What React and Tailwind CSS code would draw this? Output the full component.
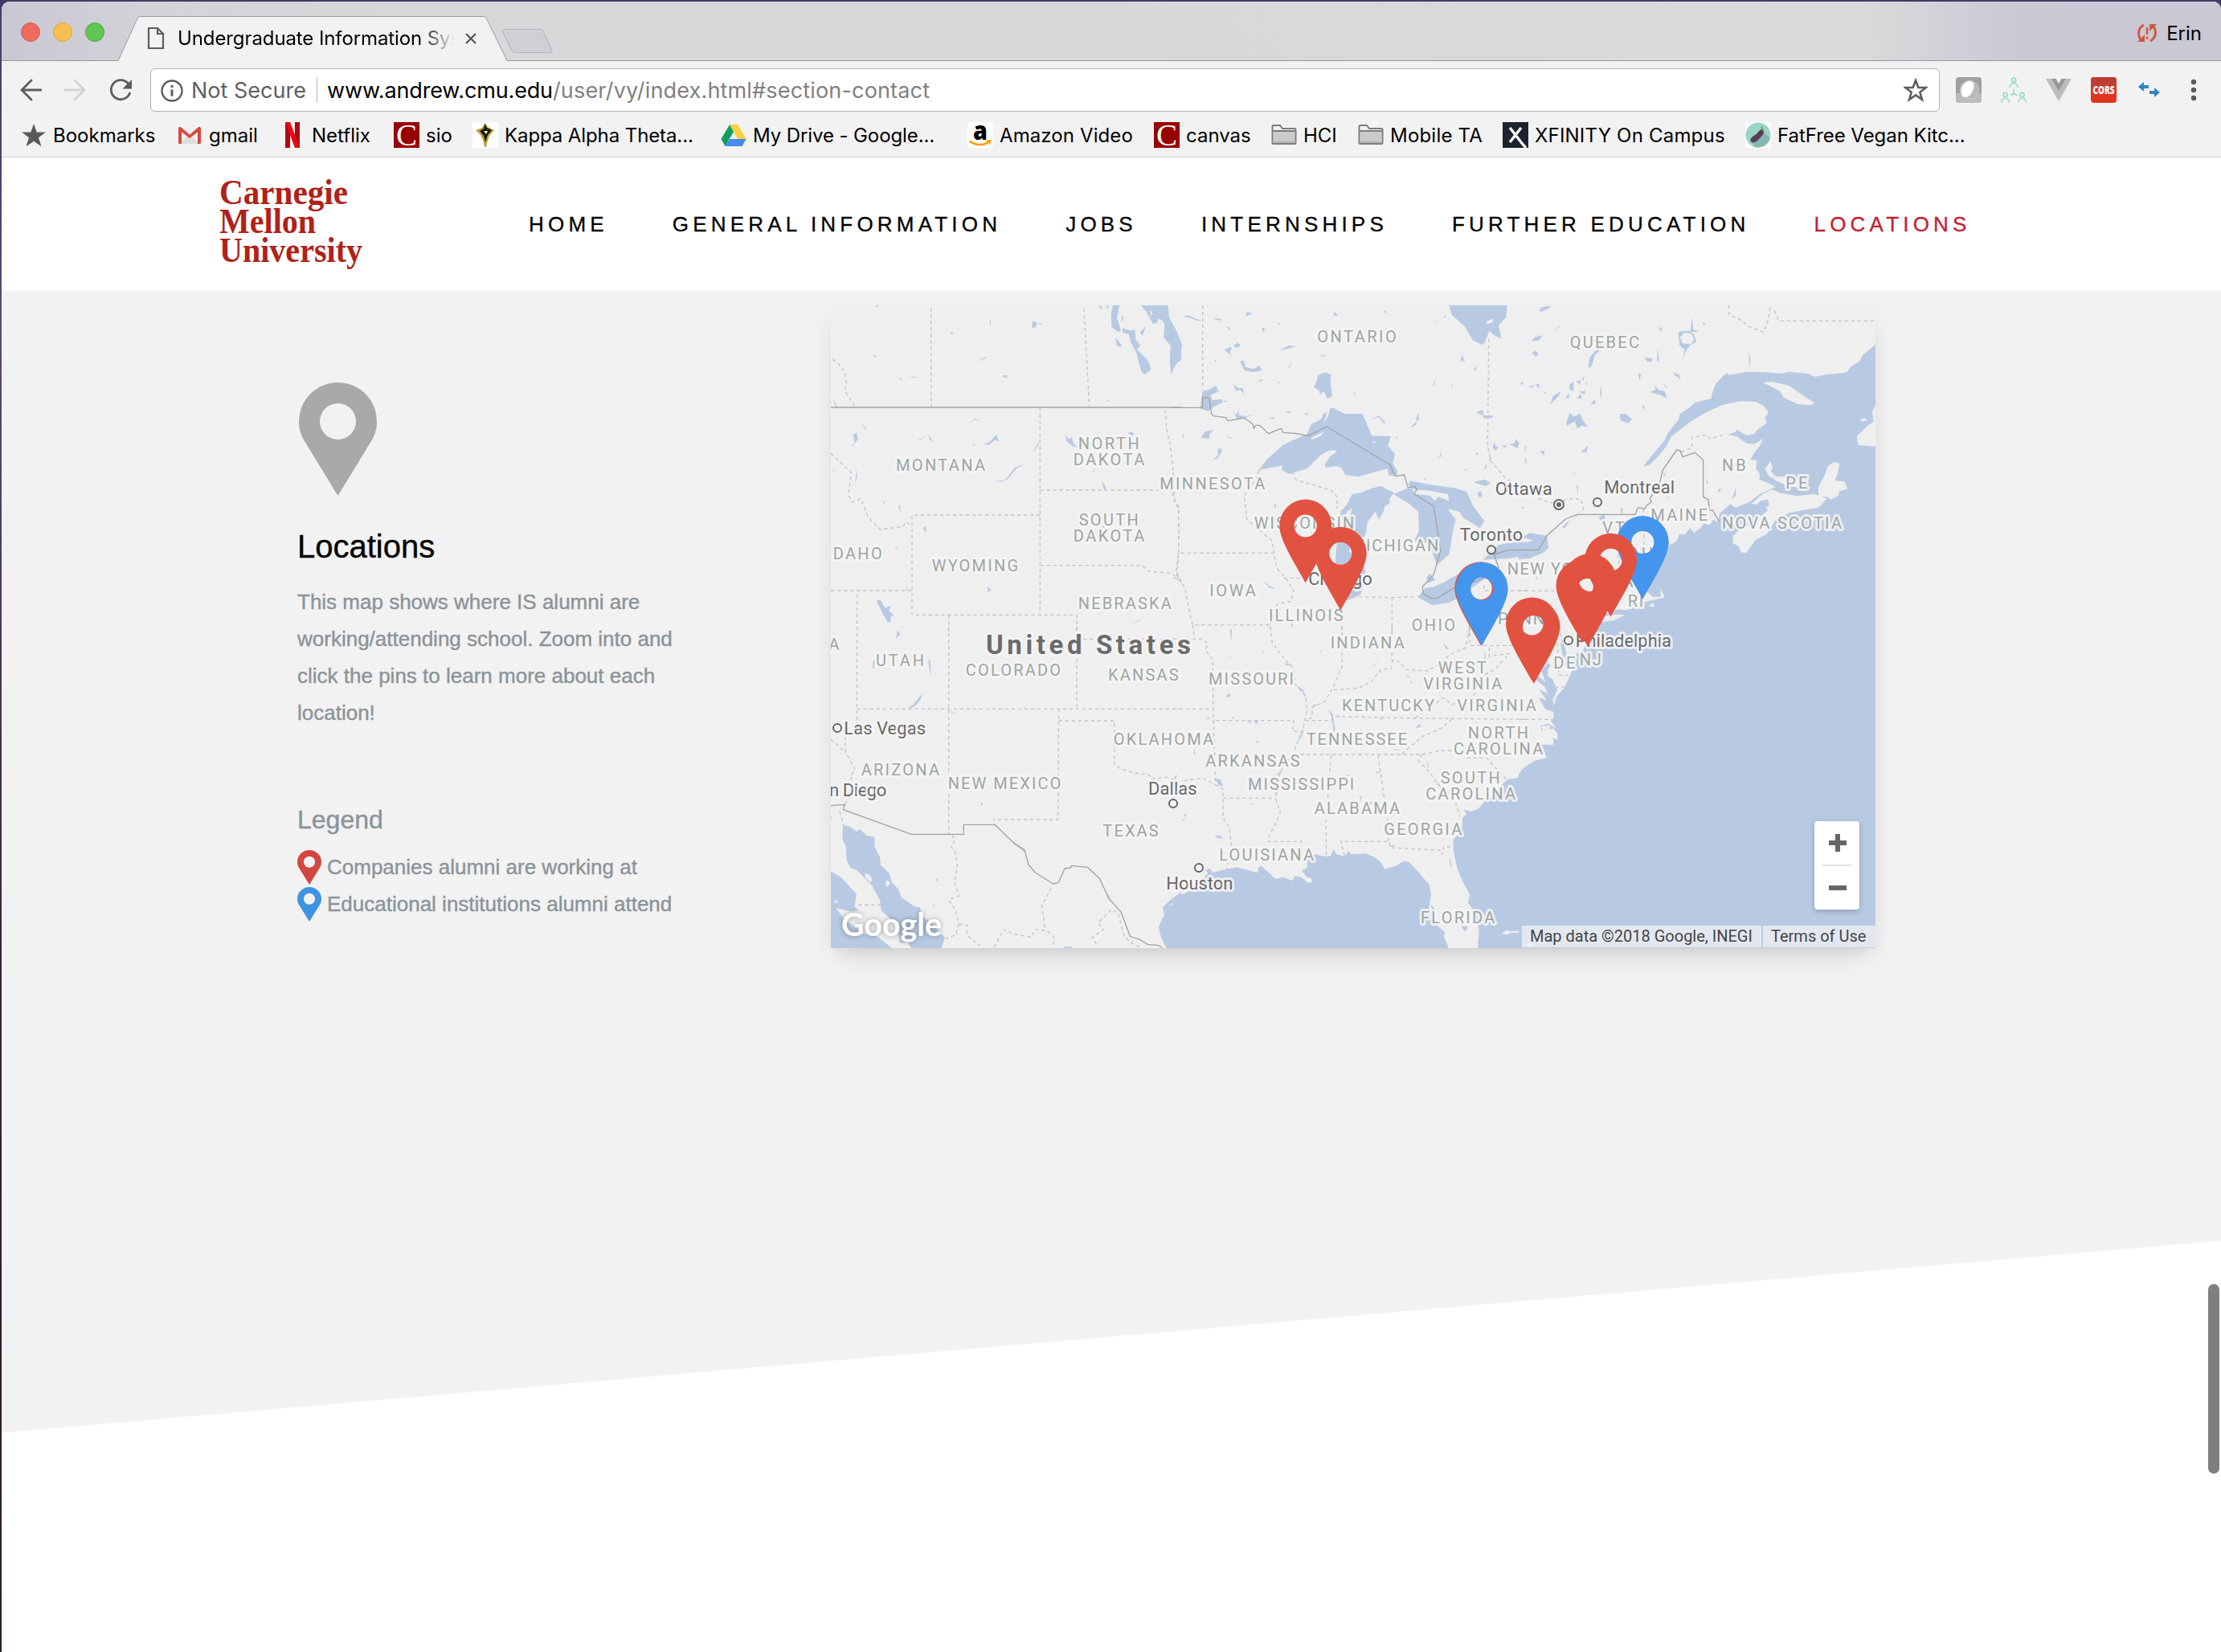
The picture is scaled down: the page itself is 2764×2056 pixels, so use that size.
import React from "react";

/* ------------------------------ map data ------------------------------ */

const WATER = "#b8cae3";
const LAND = "#efefef";

// Each sheet is a third-scale survey tile with its own origin.
const SHEETS = [
  {
    x: 1030, y: 370,
    water: [
      "M1170,30H1270L1275,75 1288,100 1305,130 1320,170V235L1300,245 1283,290 1277,240 1280,180 1255,150 1258,100 1248,85 1235,80 1230,95 1215,100 1190,55Z",
      "M1065,30H1090L1080,75 1095,125 1085,130 1060,110 1058,60Z",
      "M1100,115L1135,125 1147,120 1150,158 1168,180 1155,195 1195,235 1208,270 1185,288 1172,280 1152,205 1130,165 1125,138 1102,132Z",
      "M1075,150L1098,180 1090,187 1078,178Z", "M1165,130L1188,110 1175,145Z", "M1097,65L1104,75 1098,95Z", "M1010,30L1026,35 1022,46Z", "M1042,30H1050L1046,48Z",
      "M762,115L765,88 780,92 778,112Z", "M780,97L801,98 798,104Z", "M180,38L183,30 193,31Z", "M604,88L609,88 608,110Z", "M458,132L467,130 466,140Z",
      "M168,214L185,222 175,224Z", "M648,294L669,290 671,302Z", "M555,239L592,221 590,228Z", "M303,300L322,296 341,300Z", "M270,300L278,305 272,311Z", "M18,376L32,400 32,415Z",
      "M96,512L109,506 113,530 100,545Z", "M88,553L98,546 93,557Z", "M126,470L144,488 142,495Z", "M328,538L376,512 345,532Z", "M376,512L396,542 380,530Z", "M526,475L548,453 568,460 545,458Z",
      "M583,548L605,540 630,513 640,540 625,532 602,551Z", "M540,549L549,548 547,554Z", "M627,688L665,680 700,635 738,622 705,640 670,680 650,688Z", "M765,579L795,528 782,560Z",
      "M889,515L900,530 910,522 918,545 935,562 912,555 890,535Z", "M1121,508L1133,502 1146,510 1135,516Z", "M1025,690L1034,698 1041,722 1030,715Z", "M986,655L998,637 993,652Z",
      "M204,760L215,766 210,771Z", "M264,780L271,774 272,804Z", "M354,862L367,855 369,878Z", "M107,640L110,665 103,698Z", "M14,655L30,636 20,650Z", "M247,930L266,940 258,940Z", "M597,1080L611,1094 598,1101Z",
      "M294,1086L300,1082 296,1100Z", "M183,1135L195,1127 215,1160 238,1150 228,1170 250,1190 235,1190 237,1210 225,1214 205,1180Z", "M258,1246L272,1258 260,1260Z", "M1135,1217L1180,1198 1160,1210Z",
      "M1025,852L1035,858 1028,862Z", "M1040,386L1055,382 1048,390Z",
    ],
    land: ["M1205,42L1212,60 1205,75Z", "M1290,175L1298,190 1291,205Z"],
    solid: ["M12,411H1320"],
    dash: [
      "M386,40L387,410", "M957,42L977,410", "M793,412V1186", "M793,813H315V1186H930V1260", "M793,720H1240", "M793,1001H1172L1200,1023 1285,1030 1320,1065",
      "M1261,420L1265,490 1280,560 1292,665 1288,745 1310,780V955L1300,1030 1320,1065", "M12,1095H315", "M110,1110V1260", "M452,1186V1260",
      "M18,232L40,248 62,275 70,320 64,350 105,410", "M12,582L88,655 78,740 92,765 125,752 150,820 195,866 280,857 295,838 315,860",
    ],
  },
  {
    x: 1460, y: 370,
    water: [
      "M320,645L350,605 412,550 500,510 515,475 540,462 555,450 560,435 575,430 562,470 580,440 585,415 595,412 640,435 707,435 742,517 812,519 802,555 828,585 820,620 838,650 832,668 805,665 800,640 745,655 692,670 642,663 630,640 615,630 570,635 565,625 585,595 612,575 600,570 580,573 550,590 500,640 432,660 405,645 408,628Z",
      "M622,810L650,770 668,735 700,730 745,712 775,705 825,730 808,752 808,770 790,780 785,800 768,830 755,800 725,840 720,880 705,910 712,1000 720,1040 700,1110 650,1132 625,1100 605,985 610,930 625,850Z",
      "M822,735L870,715 890,705 900,735 960,740 975,760 990,745 1030,760 1025,735 960,722 900,718 878,700 885,685 960,700 1050,712 1095,725 1120,780 1162,835 1145,862 1120,845 1085,825 1068,800 1025,790 1055,830 1045,870 1030,960 985,1000 970,960 960,920 900,910 918,870 915,800 880,770Z",
      "M912,1120L930,1100 940,1085 975,1080 1010,1065 1060,1035 1165,1050 1100,1095 1060,1125 1030,1140 970,1150Z", "M945,1045L960,1032 978,1055 950,1068Z",
      "M1030,30H1247L1243,75 1215,105 1225,155 1195,140 1180,125 1165,165 1152,178 1118,160 1090,110 1040,65Z",
      "M525,335L535,315 540,290 570,280 590,290 587,310 593,370 575,378 562,350 548,365 546,350Z",
      "M100,415L110,350 135,345 160,330 170,350 140,365 145,385 180,380 188,390 150,410 130,425Z",
      "M0,115L20,150 33,180 25,235 10,250 0,270Z", "M1155,980L1185,955 1215,925 1260,915 1320,905V965L1250,975Z",
      "M35,70L60,68 85,80 105,86 90,88 60,76Z", "M148,78L175,80 185,85 168,86Z", "M268,72L275,55 298,60Z", "M596,68L604,55 615,68Z", "M785,50L795,50 796,62Z", "M386,92L398,98 394,104Z", "M330,112L343,118 335,132Z",
      "M202,112L212,112 210,126Z", "M225,178L240,170 252,180 235,190Z", "M190,195L220,185 212,205 225,235 215,215 205,208Z", "M250,240L262,235 270,260 300,268 322,255 332,272 300,280 265,272Z",
      "M396,200L430,180 460,182 440,188 410,196Z", "M545,215L575,218 560,222Z", "M428,265L443,242 435,262Z", "M312,315L330,305 335,312Z", "M388,315L402,317 392,321Z", "M155,235L164,232 158,242Z", "M122,275L136,272 132,276Z",
      "M225,326L245,340 262,340 262,360 250,345 235,350Z", "M190,385L205,390 192,392Z", "M220,420L235,440 245,420 245,440 275,445 300,437 270,450 240,455Z", "M420,428L442,426 432,434Z", "M488,435L508,432 498,441Z", "M355,449L384,449 372,455Z",
      "M103,525L120,500 152,496 136,510 135,527Z", "M32,520L41,505 38,524Z", "M200,517L222,527 210,526Z", "M148,605L168,590 165,568 180,563 182,575 165,602Z", "M740,455L768,442 792,468 786,472 768,448Z", "M884,487L912,460 905,478Z", "M905,458L915,432 917,458Z",
      "M1070,242L1080,214 1089,245 1080,235Z", "M1122,268L1130,258 1132,276Z", "M967,335L981,295 975,325Z", "M1037,325L1042,330 1041,345Z", "M670,370L683,348 678,362Z", "M958,98L998,80 980,90Z", "M1009,72L1020,70 1015,77Z",
      "M1131,430L1155,420 1158,440 1195,442 1190,450 1160,452 1155,440Z", "M1298,316L1309,322 1302,327Z", "M1193,560L1197,540 1204,555 1215,560 1203,572Z", "M1225,555L1245,552 1238,562Z", "M1255,548L1275,545 1280,528 1292,545 1285,563Z",
      "M1128,585L1140,578 1135,590Z", "M992,600L1000,575 1000,595Z", "M1120,690L1165,680 1186,695 1165,705Z", "M1087,640L1098,643 1092,648Z", "M1180,600L1190,598 1183,615Z", "M1312,600L1319,605 1317,625Z", "M375,778L385,770 383,788Z",
      "M336,1058L360,1078 384,1088 360,1085Z", "M437,1215L445,1212 445,1238Z", "M213,1240L218,1240 218,1260H214Z", "M936,678L946,674 940,684Z", "M1135,730L1150,722 1155,745 1140,745Z", "M1162,640L1170,620 1170,640Z", "M830,525L836,518 835,530Z",
    ],
    land: ["M515,525L565,500 550,518 518,532Z", "M632,830L650,800 668,785 663,808 640,845Z", "M1170,90L1192,80 1195,92 1172,100Z", "M742,540L762,537 750,545Z"],
    solid: [
      "M0,412H110V373L134,377 143,435 150,443 198,449 203,461 265,451 282,462 298,475 301,491 308,478 323,478 356,509 403,490 411,505 455,508 505,517 573,483 812,627 820,650 832,668 863,663 876,710 903,706 910,718 899,733 973,780 998,945 972,1037 931,1080 933,1105 962,1124 985,1124 1049,1085 1130,1060 1165,1045 1200,1010 1215,1010 1198,960 1255,943 1320,943",
    ],
    dash: [
      "M110,30V345", "M320,645L310,680 265,740 275,830 370,910 385,1010 420,1048 450,1095 440,1135 390,1145 367,1190 362,1235", "M412,1048H500", "M320,645L412,587 467,585", "M497,517L445,655 460,683 590,720 612,745 612,790",
      "M625,800L660,770 690,768 720,790 685,830", "M1178,155L1174,555 1185,610 1245,680 1320,700", "M0,655L5,760 20,790V955H380", "M20,955L15,1030 45,1090 62,1180 72,1223H362", "M0,1048H20", "M72,1223L78,1260", "M630,1180V1260",
      "M670,1118L817,1121 910,1118", "M817,1121V1260", "M1160,1075V1095H1320", "M1105,1260V1200",
    ],
  },
  {
    x: 1890, y: 370,
    water: [
      "M1332,175L1310,195 1285,215 1272,240 1240,258 1225,280 1190,285 1150,288 1105,297 1080,285 1010,278 985,285 920,280 850,278 785,290 780,282 765,292 735,325 725,350 718,378 660,392 640,410 602,435 598,455 570,490 552,515 545,535 510,575 480,612 465,632 490,625 520,595 545,565 570,520 640,465 700,430 760,402 830,388 885,390 915,405 932,430 920,450 925,470 890,495 880,510 850,515 815,495 805,505 780,512 815,520 830,530 850,545 880,548 912,528 900,555 880,580 865,605 890,610 885,640 900,660 898,680 925,690 958,708 900,735 860,765 810,785 790,772 750,808 745,840 725,830 715,850 690,845 680,860 655,880 640,862 620,885 600,885 590,910 565,925 550,955 535,985 500,1020 490,1050 470,1065 475,1095 500,1118 530,1118 530,1090 543,1115 540,1122 500,1130 460,1140 430,1160 400,1168 370,1165 330,1180 300,1195 280,1225 270,1260H1332Z",
      "M0,905L40,880 105,890 112,935 90,955 40,975 0,978Z", "M377,435L400,436 423,455 410,470 380,460Z", "M260,260L265,225 285,200 300,175 345,165 310,190 285,215 270,262Z",
      "M596,130L615,125 640,125 655,140 664,165 640,180 625,200 612,230 620,195 600,180Z", "M640,130L648,75 652,120 675,128Z", "M130,128L158,98 150,112Z", "M48,163L62,148 90,142 75,162Z", "M50,208L64,200 75,212 64,222Z", "M76,47L90,35 122,32 105,45 82,55Z",
      "M520,110L537,118 532,130Z", "M688,90L698,98 690,106Z", "M470,225L500,228 498,240 480,240Z", "M516,235L520,190 524,240Z", "M445,285L456,288 452,312Z", "M488,355L510,345 508,330 525,348 545,350 555,378 530,365Z", "M580,280L600,290 605,315 598,300 582,292Z",
      "M858,200L866,230 862,270Z", "M62,325L78,325 75,342Z", "M6,318L18,320 12,328Z", "M36,335L60,325 50,338Z", "M96,350L104,358 98,360Z", "M128,370L158,350 150,368 115,402 122,388Z", "M175,375L188,358 188,378Z", "M190,325L205,315 205,350 190,345Z", "M215,312L232,310 228,328Z", "M225,352L250,350 245,362Z",
      "M218,375L232,360 236,382Z", "M268,398L285,380 288,398Z", "M236,310L245,290 242,310Z", "M250,322L256,316 254,328Z", "M305,335L309,340 308,380 303,360Z", "M178,468L190,430 205,445 230,435 240,460 258,485 235,480 218,490 210,462 180,480Z", "M462,405L470,402 466,425Z", "M543,320L552,340 546,335Z",
      "M80,575L95,572 95,592Z", "M232,578L262,552 252,578Z", "M22,562L28,552 26,575Z", "M200,670L214,645 208,660Z", "M350,700L406,652 370,684Z", "M216,700L222,705 220,740Z", "M336,735L350,695 344,720Z", "M300,820L320,810 325,860 310,850Z", "M380,790L388,785 387,815Z", "M160,860L190,830 175,860Z", "M190,840L240,792 215,820Z", "M550,735L565,760 555,750Z",
      "M742,720L755,712 750,728Z", "M795,755L812,708 810,740Z", "M700,680L708,690 704,700Z", "M540,655L548,660 543,670Z", "M10,780L20,785 15,790Z", "M66,1040L70,1055 62,1050Z",
    ],
    land: [
      "M945,718L975,730 1040,742 1100,735 1120,740 1150,752 1120,785 1060,795 1010,805 960,830 925,885 885,905 850,955 830,952 822,930 800,918 800,890 830,862 870,845 930,795 925,785 935,775 930,755 905,760 885,775 870,770 910,735Z",
      "M1120,745L1118,710 1140,670 1155,630 1175,615 1198,620 1190,660 1180,685 1215,688 1228,715 1195,725 1195,740 1165,755 1150,745Z",
      "M920,640L940,613 948,635 942,650 960,670 990,668 1020,690 1075,695 1050,712 1000,702 960,685 950,675 935,670Z",
      "M912,318L945,315 1010,330 1060,365 1105,395 1090,403 1040,398 990,375 975,350Z", "M1332,400L1320,430 1325,465 1305,478 1262,520 1268,552 1332,557Z", "M1272,458L1290,450 1303,460 1280,463Z",
      "M310,1195L345,1185 397,1185 360,1205 310,1212Z", "M602,150L618,132 645,135 655,155 645,175 612,172Z", "M0,905L30,900 55,908 30,915 0,912Z", "M485,1155L500,1140 508,1155Z",
    ],
    solid: ["M0,943H74L105,890 175,828 218,811H435L445,785 470,790 480,775 495,765 490,750 525,700 538,645 590,570 603,573 612,596 657,580 689,607V745L708,755 712,795 725,795 748,838"],
    dash: [
      "M785,30V65L830,85 860,110 915,130 930,90 940,30", "M955,50L970,88H1332", "M607,578L648,560V522L700,515 715,528 770,512", "M242,795L232,755 205,750 120,768 70,750", "M0,1096H150", "M960,700L1040,728 1090,710 1105,680V640",
      "M465,790L470,1000", "M370,960L375,1000",
    ],
  },
  {
    x: 1030, y: 780,
    water: [
      "M57,742L80,745 110,765 120,755 145,780 175,785 175,820 195,860 198,890 230,920 240,955 265,980 275,1010 325,1045 345,1048 350,1080 380,1100 438,1160 425,1200H312L300,1180 270,1180 255,1110 200,1060 195,1020 165,965 110,910 85,900 70,870 68,820 55,795Z",
      "M12,913L50,935 108,998 100,1045 115,1058 85,1062 30,1050 60,1090 130,1145 175,1150 210,1175 240,1200H12Z", "M1320,990L1280,1020 1250,1048 1258,1075 1235,1120 1245,1160 1265,1200H1320Z",
      "M255,45L260,15 272,28Z", "M168,155L170,125 178,128 172,155Z", "M376,122L382,125 387,182 380,160Z", "M295,307L320,290 355,247 345,275 325,298Z", "M452,312L482,326 465,322Z", "M570,652L581,664 574,667Z", "M403,940L414,945 406,950Z", "M394,1035L399,1045 396,1052Z", "M690,798L735,835 738,845 715,825Z", "M1040,990L1070,1038 1055,1020Z", "M1295,565L1303,550 1300,572Z", "M882,1195H912V1200H882Z", "M12,708L18,716 14,720Z", "M1136,1172L1142,1170 1138,1182Z",
    ],
    land: ["M140,920L155,925 168,945 160,955 140,935Z", "M215,955L225,945 233,960 220,972Z", "M22,1028L35,1018 34,1032Z", "M1270,1045L1310,1015 1290,1035Z"],
    solid: ["M12,668L64,664 58,683 313,775H508V739H624L700,812 735,833 750,888 775,918 842,960 862,955 885,903 907,900 910,892 970,898 1015,940 1050,1015 1095,1065 1130,1157 1160,1165 1195,1186 1235,1190 1250,1198"],
    dash: [
      "M110,0L109,350", "M452,0V775", "M110,307H1320", "M930,0V307", "M930,46H1320", "M863,307L860,720H618", "M863,351H1070V515L1090,528 1140,545 1200,552 1210,568 1265,562 1300,572", "M65,385L68,470 103,535 85,555 90,580 80,640 64,664",
      "M12,420L68,470", "M45,690L60,745", "M115,1038H200", "M465,778L475,800 460,820 478,845 485,900 473,950 490,1005 452,1020 478,1060 490,1110 478,1150 440,1165", "M490,1110L520,1115V1150L540,1170 570,1190",
      "M622,1197L657,1130 700,1148 760,1160 775,1130 820,1135 845,1160 843,1197", "M835,975L800,1040 812,1130", "M1165,1195L1130,1180 1105,1150 1085,1070 1060,1055 1010,1105 1030,1130 988,1160 1010,1195",
    ],
  },
  {
    x: 1460, y: 780,
    water: [
      "M0,1020L25,1002 70,985 130,920 120,908 135,903 150,917 200,905 240,898 300,915 315,918 318,898 330,893 350,912 375,935 385,942 410,935 445,948 455,930 480,935 500,955 520,955 515,940 500,935 480,910 500,900 500,875 530,850 570,858 590,855 598,830 610,850 640,858 655,838 665,850 720,847 755,862 775,880 790,905 835,892 860,875 880,878 915,915 940,945 955,960 963,1000 955,1050 970,1075 985,1115 1015,1140 1010,1155 1027,1195V1200H0Z",
      "M1320,520L1300,540 1285,565 1250,570 1220,595 1200,625 1160,655 1140,680 1110,690 1085,682 1095,700 1080,715 1080,740 1065,775 1045,795 1047,840 1060,900 1080,950 1108,1000 1100,1030 1115,1050 1142,1130 1137,1200H1320Z",
      "M1075,1118H1100L1098,1130 1088,1138Z", "M1030,865L1035,870 1042,900 1036,895Z", "M960,1035L975,1050 968,1060Z", "M198,260L207,248 215,258 204,264Z", "M275,350L290,355 288,362Z", "M300,350L316,352 312,366Z", "M306,428L320,426 316,434Z", "M122,344L134,338 136,346Z", "M78,460L82,458 81,478H77Z",
      "M155,778L180,782 182,792 165,788Z", "M288,660L300,660 295,665Z", "M40,700L50,700 44,712Z", "M30,722L44,720 38,725Z", "M412,136L450,142 425,145Z", "M455,215L485,235 500,275 493,262 480,240Z", "M582,310L595,325 605,385 600,395 592,340Z", "M905,378L920,362 925,375Z", "M768,338L785,345 778,348Z", "M815,455L850,462 835,462Z", "M750,545L765,540 772,545Z", "M695,630L702,632 702,655Z", "M730,660L740,652 742,665Z", "M545,720L556,748 550,738Z",
      "M1008,60L1028,82 1018,85Z", "M1160,90L1168,112 1165,130Z", "M545,92L552,86 550,96Z", "M332,92L343,86 340,94Z", "M197,116L237,108 215,114Z", "M742,150L764,130 755,142Z", "M865,182L885,187 878,190Z", "M884,205L893,205 888,213Z", "M214,10L218,10V50L214,42Z", "M948,500L954,515 952,530Z", "M985,582L996,590 988,592Z", "M806,818L828,814 820,822Z", "M460,440L478,395 488,375 480,405Z", "M385,555L410,530 400,550Z", "M155,565L175,570 188,595 170,592Z", "M520,292L540,290 525,300Z", "M218,338L228,336 224,344Z", "M646,556L660,552 656,558Z", "M5,565L12,550 12,562Z", "M382,610L392,605 386,630Z",
    ],
    land: ["M1228,1145L1245,1133 1260,1138 1290,1135 1292,1142 1262,1143 1240,1150Z", "M500,938L510,935 520,955Z"],
    solid: [],
    dash: [
      "M0,307H145", "M0,46H110L130,65 120,85 148,125 150,340 155,480 158,590 185,605 187,715 210,750 217,810 200,910", "M40,575L110,565 158,590", "M160,350H450L445,390 485,393 460,440 448,478 410,520 385,580 383,640 400,695 380,740 355,790",
      "M187,640H383", "M352,802H480V870", "M363,0L370,60 415,120 448,155 455,215 495,260 500,310 485,380", "M630,0L630,150 600,220 565,280 520,300 518,340 495,350H590L605,335 880,341 1320,346", "M600,235L690,230 740,205 775,160 815,155 820,125 845,130 870,160 945,165 1000,140 1030,105 1090,80 1108,0",
      "M475,477H930L1000,462 1090,465V490H1170L1245,570", "M590,480L570,720 572,858", "M765,480L788,640 800,700 805,800", "M640,855L625,802H805L812,825 1000,835 1005,850 1010,822 1045,822", "M930,477L915,500 955,540 990,590 1050,640 1070,710", "M1040,345L1000,380 930,410 870,460 850,478",
      "M905,340L1010,265 1040,290 1120,270 1140,190 1200,160 1255,100 1180,110V75", "M1108,0V70H1270L1320,130", "M817,0V125",
    ],
  },
  {
    x: 1890, y: 780,
    water: [
      "M300,0L290,30 270,55 245,75 240,90 215,100 205,120 210,140 190,185 172,225 140,262 130,298 128,270 145,235 125,195 108,185 110,155 120,145 108,135 100,145 85,165 100,208 75,185 60,195 98,225 108,250 75,232 105,275 75,265 100,308 130,318 130,345 120,350 140,382 112,362 80,370 85,388 130,380 145,400V422L128,415 130,440 90,440 75,430 95,475 105,490 60,500 20,525 0,550V1200H1332V0Z",
      "M155,60L170,65 180,110 190,130 180,150 170,140 165,110Z",
    ],
    land: ["M30,1188L48,1176 46,1200Z", "M30,1135L45,1150 35,1145Z", "M130,295L150,240 172,225 140,262Z", "M82,372L118,368 112,385 90,388Z"],
    solid: [],
    dash: ["M0,346H142", "M145,60L150,181H192", "M112,230L172,224", "M150,0L165,60"],
  },
];

const STATES = [
  ["MONTANA", 1116, 1225, 586], ["NORTH", 1342.7, 1416.7, 559.3], ["DAKOTA", 1336.7, 1423.3, 579], ["SOUTH", 1343.7, 1415.7, 654], ["DAKOTA", 1336.7, 1423.3, 674],
  ["DAHO", 1037.7, 1096.7, 696], ["WYOMING", 1160.7, 1266, 711], ["NEBRASKA", 1342.7, 1456.7, 758.3], ["MINNESOTA", 1444.3, 1573.3, 609], ["ONTARIO", 1640.3, 1736.7, 426],
  ["WISCONSIN", 1561.7, 1684.3, 658], ["MICHIGAN", 1681.7, 1789.3, 686], ["IOWA", 1506.3, 1561.7, 742.3], ["ILLINOIS", 1580, 1670.7, 773.3], ["OHIO", 1757.7, 1810, 785],
  ["NEW YORK", 1876.7, 1984, 715], ["PENN", 1865, 1921, 777], ["QUEBEC", 1954.7, 2039, 433.3], ["MAINE", 2055.3, 2124, 648], ["NB", 2144, 2171.7, 586], ["PE", 2223.3, 2248.3, 608],
  ["NOVA SCOTIA", 2144, 2291, 658.3], ["VT", 1995.3, 2021, 664], ["NH", 2032, 2056, 696], ["MA", 2003, 2031.5, 731], ["RI", 2026.7, 2044.3, 755], ["CT", 1990, 2016.5, 755],
  ["A", 1032.5, 1045, 809.3], ["UTAH", 1091, 1149, 829.3], ["COLORADO", 1202.7, 1319, 841.3], ["KANSAS", 1380, 1465.7, 847], ["ARIZONA", 1072.7, 1168, 965.3], ["NEW MEXICO", 1180.7, 1319.3, 982],
  ["OKLAHOMA", 1386.7, 1509, 927.3], ["TEXAS", 1373.3, 1440.7, 1040.7], ["MISSOURI", 1505, 1609, 852], ["INDIANA", 1656.7, 1746.7, 807], ["KENTUCKY", 1671, 1784, 885], ["WEST", 1790.7, 1849, 838.3],
  ["VIRGINIA", 1772.3, 1868.3, 858.3], ["VIRGINIA", 1814.3, 1910.7, 885], ["NORTH", 1827.7, 1901, 919], ["CAROLINA", 1810, 1919.3, 939], ["TENNESSEE", 1626.7, 1750, 927], ["ARKANSAS", 1501.3, 1616.7, 954],
  ["MISSISSIPPI", 1554, 1684.3, 983.3], ["ALABAMA", 1636.7, 1741, 1013.3], ["SOUTH", 1793.7, 1865.7, 975], ["CAROLINA", 1775.3, 1885, 995], ["GEORGIA", 1723.3, 1818.3, 1039], ["LOUISIANA", 1518.3, 1634, 1071.3],
  ["FLORIDA", 1769, 1859.3, 1149], ["DE", 1934.3, 1959.3, 832], ["NJ", 1966.7, 1991.7, 828.3],
];

const CITIES = [
  ["Ottawa", 1861.7, 1930.7, 616], ["Toronto", 1817.7, 1894, 672.7], ["Chicago", 1629.3, 1706.7, 728], ["Montreal", 1997.3, 2083, 614], ["Las Vegas", 1051.3, 1151, 913.7],
  ["San Diego", 1009, 1102.3, 991], ["Dallas", 1430, 1488.7, 989.3], ["Houston", 1452.3, 1533.3, 1106.7], ["Philadelphia", 1961.7, 2079, 805],
];

const DOTS = [[1856, 684.3], [1042, 906], [1460, 1000], [1492, 1080], [1988, 625], [1952, 797]];

const RED = "#e25241";
const BLUE = "#4496ec";
const PINS = [
  [1624.7, 725.5, RED], [1668.3, 759.8, RED], [1842.7, 803.2, RED], [1844.2, 803.8, BLUE], [2044.3, 746, BLUE], [2004.6, 767.7, RED],
  [1979, 793, RED], [1969, 800, RED], [1976, 805, RED], [1906.5, 847.5, RED], [1909, 851, RED],
];

function MapLabel({ text, x0, x1, y, size, color, weight }) {
  return (
    <text
      x={x0 - 1} y={y} textLength={x1 - x0 + 2} fontSize={size} fontFamily="Roboto, sans-serif" fontWeight={weight || 400}
      fill={color} stroke="#f5f5f5" strokeOpacity="0.85" strokeWidth="6" strokeLinejoin="round" paintOrder="stroke"
    >
      {text}
    </text>
  );
}

function MapCanvas() {
  return (
    <svg viewBox="1034 380 1300 800" width="1300" height="800" className="block">
      <rect x="1034" y="380" width="1300" height="800" fill={LAND} />
      {SHEETS.map((s, i) => (
        <g key={i} transform={`translate(${s.x} ${s.y}) scale(0.33333)`}>
          <path d={s.water.join("")} fill={WATER} fillRule="nonzero" />
          <path d={s.land.join("")} fill={LAND} />
        </g>
      ))}
      {SHEETS.map((s, i) => (
        <g key={i} transform={`translate(${s.x} ${s.y}) scale(0.33333)`} fill="none">
          <path d={s.dash.join("")} stroke="#c3c3c3" strokeWidth="4" strokeDasharray="13 11" />
          <path d={s.solid.join("")} stroke="#a2a2a2" strokeWidth="4" strokeLinejoin="round" />
        </g>
      ))}
      {STATES.map(([t, a, b, y], i) => (
        <MapLabel key={i} text={t} x0={a} x1={b} y={y} size={20} color="#9da5a2" />
      ))}
      {DOTS.map(([x, y], i) => (
        <circle key={i} cx={x} cy={y} r="5" fill="#f5f5f5" stroke="#666" strokeWidth="2" />
      ))}
      <circle cx="1940" cy="628" r="6" fill="#f5f5f5" stroke="#666" strokeWidth="2" />
      <circle cx="1940" cy="628" r="3" fill="#666" />
      {CITIES.map(([t, a, b, y], i) => (
        <MapLabel key={i} text={t} x0={a} x1={b} y={y} size={22} color="#686868" />
      ))}
      <MapLabel text="United States" x0={1228} x1={1481} y={813.7} size={33} color="#6b6b6b" weight={700} />
      {PINS.map(([x, y, c], i) => (
        <path
          key={i} transform={`translate(${x} ${y})`} fill={c} fillRule="evenodd"
          d="M0 0C-8-16-32.500-52-32.500-71A32.500 33 0 0 1 32.500-71C32.500-52 8-16 0 0ZM14-71A14 14 0 1 0-14-71A14 14 0 1 0 14-71Z"
        />
      ))}
      <text x="1047" y="1164.500" textLength="125" lengthAdjust="spacingAndGlyphs" fontSize="40" fontFamily="Lato, sans-serif" fontWeight="700" fill="#fff" className="drop-shadow-[0_0_3px_rgba(0,0,0,0.35)]">
        Google
      </text>
    </svg>
  );
}

/* ------------------------------- icons -------------------------------- */

function PinShape({ className, color, hole = 22.5 }) {
  return (
    <svg viewBox="0 0 97 141" preserveAspectRatio="none" className={className}>
      <path
        fill={color} fillRule="evenodd"
        d={`M48.500 141L7 73C2 65 0 57 0 48.500A48.500 48.500 0 0 1 97 48.500C97 57 95 65 90 73ZM${48.5 - hole} 48.500a${hole} ${hole} 0 1 0 ${hole * 2} 0a${hole} ${hole} 0 1 0 ${-hole * 2} 0Z`}
      />
    </svg>
  );
}

function I({ children, className = "h-8 w-8" }) {
  return <svg viewBox="0 0 32 32" className={className}>{children}</svg>;
}

const CmuIcon = () => (
  <I>
    <rect width="32" height="32" fill="#990000" />
    <text x="3" y="29" fontSize="38" textLength="26" lengthAdjust="spacingAndGlyphs" fontFamily="Liberation Serif, serif" fill="#fff">C</text>
  </I>
);

const FolderIcon = () => (
  <I>
    <path d="M1.500 27V5.500a1.500 1.500 0 0 1 1.500-1.500h8l3 4h15a1.500 1.500 0 0 1 1.500 1.500V25.500a1.500 1.500 0 0 1-1.500 1.500H3a1.500 1.500 0 0 1-1.500-1.500z" fill="#f0f0f0" stroke="#7c7c7c" strokeWidth="2" />
    <path d="M3 12h26v14H3z" fill="#cbcbcb" />
    <path d="M2 11h28" stroke="#7c7c7c" strokeWidth="2" />
    <path d="M3 24h26v2H3z" fill="#b4b4b4" />
  </I>
);

const ICONS = {
  star: <I><path d="M16 2l3.700 10.500H31l-9 6.800 3.400 11L16 23.800 6.600 30.300l3.400-11-9-6.800h11.300z" fill="#5a5a5a" /></I>,
  gmail: (
    <I>
      <path d="M4 6h24v21H4z" fill="#f2f2f2" />
      <path d="M4 27l12-12 12 12z" fill="#dedede" />
      <path d="M2 8v17.500A1.500 1.500 0 0 0 3.500 27H6V10zM30 8v17.500a1.500 1.500 0 0 1-1.500 1.500H26V10z" fill="#d54b3d" />
      <path d="M2 8c0-2 2-2.500 3.500-1.500L16 15.500 26.500 6.500C28 5.500 30 6 30 8l-1 2-13 10L3 10z" fill="#dc4b3e" />
    </I>
  ),
  netflix: (
    <I>
      <path d="M7 0h6v32H7zM19 0h6v32h-6z" fill="#b1060f" />
      <path d="M7 0h6l12 32h-6z" fill="#e50914" />
    </I>
  ),
  cmu: <CmuIcon />,
  theta: (
    <I>
      <path d="M0 0h32v32H0z" fill="#fff" />
      <path d="M16 1l3 5 8 4-6 7-2 6-2 8h-2l-2-9-3-6-6-6 8-3z" fill="#bfa23c" />
      <path d="M15 2l3 5 6 3-5 6-3 9-2-8-5-6 5-3z" fill="#1f1c16" />
      <path d="M14 11h5l-2 4z" fill="#fff" />
    </I>
  ),
  drive: (
    <I>
      <path d="M11 3h10l10.500 18H21z" fill="#ffcf3f" />
      <path d="M11 3L.5 21l5 9L16 12z" fill="#11a15f" />
      <path d="M11 21h20.500l-5 9h-21z" fill="#4688f4" />
    </I>
  ),
  amazon: (
    <I>
      <rect width="32" height="32" rx="4" fill="#fff" />
      <text x="7" y="21.500" fontSize="31" textLength="18" lengthAdjust="spacingAndGlyphs" fontFamily="Open Sans, sans-serif" fontWeight="800" fill="#000">a</text>
      <path d="M3.500 24c6 5 17 5.500 23 .5" fill="none" stroke="#f90" strokeWidth="2.400" strokeLinecap="round" />
      <path d="M23 23.500l5.500-.7-1 5" fill="none" stroke="#f90" strokeWidth="1.600" />
    </I>
  ),
  folder: <FolderIcon />,
  xfinity: (
    <I>
      <path d="M0 0h32v32H0z" fill="#1d2230" />
      <path d="M9 7L23 25 29 32M23 7L9 25" stroke="#fff" strokeWidth="3.400" fill="none" />
    </I>
  ),
  vegan: (
    <I>
      <path d="M0 0h32v32H0z" fill="#fff" />
      <circle cx="16" cy="16" r="15.500" fill="#9bd5c8" />
      <path d="M22 12l9 8a15.500 15.500 0 0 1-20 10.500l-4-8z" fill="#86b9ae" />
      <path d="M21 9c4 3 1 7-2 10s-7 8-11 6 0-7 4-9 5-7 9-7z" fill="#5d3a58" />
      <path d="M21 5c-1 2 0 4 2 6" stroke="#6fae4a" strokeWidth="2" fill="none" />
    </I>
  ),
};

const BOOKMARKS = [
  ["star", "Bookmarks", "w-[194px]"], ["gmail", "gmail", "w-[128px]"], ["netflix", "Netflix", "w-[142px]"], ["cmu", "sio", "w-[98px]"],
  ["theta", "Kappa Alpha Theta...", "w-[309px] tracking-[-0.1px]"], ["drive", "My Drive - Google...", "w-[307px] tracking-[-0.1px]"], ["amazon", "Amazon Video", "w-[232px] tracking-[0.1px]"], ["cmu", "canvas", "w-[146px]"],
  ["folder", "HCI", "w-[108px]"], ["folder", "Mobile TA", "w-[180px] tracking-[0.2px]"], ["xfinity", "XFINITY On Campus", "w-[302px] tracking-[0.2px]"], ["vegan", "FatFree Vegan Kitc...", "w-[280px] tracking-[-0.05px]"],
];

/* --------------------------- browser chrome --------------------------- */

function TitleBar() {
  return (
    <div className="flex h-[74px] items-end bg-[linear-gradient(90deg,#cac7d3_0%,#d4d3d8_7%,#d7d8da_20%,#d8d8da_50%,#d9dadb_84%,#cbc8d4_91%,#c9c8d4_100%)] shadow-[inset_0_-1px_0_#97979c]">
      <div className="mb-[24px] ml-6 flex w-[121px] gap-4">
        <span className="size-6 rounded-full border border-[#d9574c] bg-[#ee6b60]" />
        <span className="size-6 rounded-full border border-[#dfa53b] bg-[#f6bf50]" />
        <span className="size-6 rounded-full border border-[#4ba93c] bg-[#62c655]" />
      </div>
      <div className="relative h-[56px] w-[486px]">
        <svg viewBox="0 0 486 56" className="absolute inset-0 h-full w-full">
          <path d="M0 55.500L24 3Q25 .5 28 .5H454Q457 .5 458.500 3L484 55.500V57H0Z" fill="#f2f2f2" />
          <path d="M0 55.500L24 3Q25 .5 28 .5H454Q457 .5 458.500 3L484 55.500" fill="none" stroke="#97979c" />
        </svg>
        <div className="relative flex h-full items-center pl-[36px]">
          <svg viewBox="0 0 22 30" className="h-[30px] w-[22px] shrink-0">
            <path d="M2 2h11l7 7v18H2zM13 2v7h7" fill="none" stroke="#5c5c5c" strokeWidth="2.200" />
          </svg>
          <span className="ml-[16px] w-[345px] shrink-0 overflow-hidden whitespace-nowrap bg-[linear-gradient(90deg,#000_87%,transparent_100%)] bg-clip-text text-[24px] leading-9 tracking-[-0.1px] text-transparent">
            Undergraduate Information Systems
          </span>
          <svg viewBox="0 0 16 16" className="ml-[12px] size-4 shrink-0"><path d="M2 2l12 12M14 2L2 14" stroke="#555" strokeWidth="2.200" /></svg>
        </div>
      </div>
      <svg viewBox="0 0 68 34" className="mb-[8px] ml-[-10px] h-[34px] w-[68px]">
        <path d="M5 2.500H49Q52 2.500 53 5L64 29Q65 31.500 62 31.500H18Q15 31.500 14 29L2 5Q1.500 2.500 5 2.500Z" fill="#cfd0d3" stroke="#b3b3b7" />
      </svg>
      <div className="mb-[18px] ml-auto mr-[24px] flex items-center gap-[11px]">
        <svg viewBox="0 0 26 24" className="mb-[2px] h-6 w-[26px]">
          <path d="M9 2C1 6 1 16 6 21M17 22C25 18 25 8 20 3" fill="none" stroke="#cb5a3f" strokeWidth="3" />
          <path d="M1 23h9v-9zM25 1h-9v9z" fill="#cb5a3f" />
          <path d="M13 5v9M13 16.500v3" stroke="#cb5a3f" strokeWidth="2.600" />
        </svg>
        <span className="text-[24px] leading-8">Erin</span>
      </div>
    </div>
  );
}

function Toolbar() {
  return (
    <div className="flex h-[72px] items-center">
      <svg viewBox="0 0 28 28" className="ml-[22px] size-7"><path d="M15 2L3 14l12 12M3 14h24" fill="none" stroke="#5c5c5c" strokeWidth="2.800" strokeLinecap="round" /></svg>
      <svg viewBox="0 0 28 28" className="ml-[28px] size-7"><path d="M13 2l12 12-12 12M25 14H1" fill="none" stroke="#d3d3d3" strokeWidth="2.800" strokeLinecap="round" /></svg>
      <svg viewBox="0 0 28 28" className="ml-[28px] size-7">
        <path d="M23.500 6A12 12 0 1 0 25.500 18" fill="none" stroke="#5c5c5c" strokeWidth="2.800" strokeLinecap="round" />
        <path d="M28 1v11.500H16.500z" fill="#5c5c5c" />
      </svg>
      <div className="ml-[23px] flex h-[54px] w-[2227px] items-center rounded-[6px] border border-[#b3b3b3] bg-white text-[27px]">
        <svg viewBox="0 0 28 28" className="ml-[12px] mt-px size-7">
          <circle cx="14" cy="14" r="12.500" fill="none" stroke="#5c5c5c" strokeWidth="2.400" />
          <path d="M14 12.500v8M14 7v3" stroke="#5c5c5c" strokeWidth="3" />
        </svg>
        <span className="ml-[10px] mt-[2px] w-[156px] shrink-0 whitespace-nowrap text-[#5f5f5f]">Not Secure</span>
        <span className="h-8 w-px bg-[#b5b5b5]" />
        <span className="ml-[12px] mt-[2px] flex-1 whitespace-nowrap tracking-[-0.15px] text-black">www.andrew.cmu.edu<span className="tracking-[0.17px] text-[#808080]">/user/vy/index.html#section-contact</span></span>
        <svg viewBox="0 0 30 30" className="mr-[14px] size-[30px]">
          <path d="M15 3l3.300 9H28l-7.700 5.800L23 27l-8-5.600L7 27l2.700-9.200L2 12h9.700z" fill="none" stroke="#5f5f5f" strokeWidth="2.600" />
        </svg>
      </div>
      <div className="ml-[20px] flex gap-6">
        <I>
          <rect width="32" height="32" rx="4" fill="#a0a0a0" />
          <path d="M0 20h32v8a4 4 0 0 1-4 4H4a4 4 0 0 1-4-4z" fill="#bcbcbc" />
          <circle cx="17" cy="16" r="11.500" fill="#b9b9b9" stroke="#cdcdcd" />
          <path d="M7 14C9 5 20 2 22 8s-3 16-9 17-7-6-6-11z" fill="#fff" />
        </I>
        <I>
          <g fill="none" stroke="#a3dcc6" strokeWidth="1.800">
            <circle cx="16" cy="3.500" r="2.600" /><circle cx="5.500" cy="22" r="2.600" /><circle cx="26.500" cy="22" r="2.600" />
            <path d="M11 13c0-7 10-7 10 0M.8 31.500c0-7 9.600-7 9.600 0M21.800 31.500c0-7 9.600-7 9.600 0M16 15v5l-4.500 3M16 20l4.500 3" />
          </g>
        </I>
        <I>
          <path d="M0 2h7l9 15.500L25 2h7L16 30z" fill="#bcbcbc" />
          <path d="M7 2h5.500L16 8l3.500-6H25l-9 15.500z" fill="#969696" />
        </I>
        <I>
          <rect width="32" height="32" rx="4" fill="#e0351f" />
          <path d="M0 12V4a4 4 0 0 1 4-4h24a4 4 0 0 1 4 4v8z" fill="#bf3d30" />
          <text x="2.500" y="21" fontSize="14" textLength="27" lengthAdjust="spacingAndGlyphs" fontFamily="Open Sans, sans-serif" fontWeight="800" fill="#fff">CORS</text>
        </I>
        <I>
          <path d="M3 12l7-6v4h6v4h-6v4zM30 19l-7-6v4h-6v4h6v4z" fill="#3186c2" />
        </I>
        <I>
          <g fill="#5a5a5a"><circle cx="16" cy="6" r="3.200" /><circle cx="16" cy="16" r="3.200" /><circle cx="16" cy="26" r="3.200" /></g>
        </I>
      </div>
    </div>
  );
}

function BookmarkBar() {
  return (
    <div className="flex h-[48px] items-start border-b border-[#d0d0d0] pl-6 pt-[3px] text-[24px] leading-8">
      {BOOKMARKS.map(([icon, label, cls], i) => (
        <div key={i} className={`flex shrink-0 items-center gap-2 whitespace-nowrap ${cls}`}>
          {ICONS[icon]}
          <span className="mt-[2px]">{label}</span>
        </div>
      ))}
    </div>
  );
}

/* -------------------------------- page -------------------------------- */

const NAV = ["HOME", "GENERAL INFORMATION", "JOBS", "INTERNSHIPS", "FURTHER EDUCATION", "LOCATIONS"];

function SiteHeader() {
  return (
    <header className="flex h-[166px] items-center bg-white pl-[270px] font-['Liberation_Sans',sans-serif]">
      <svg viewBox="0 0 184 120" className="h-[120px] w-[184px]" fontFamily="Liberation Serif, serif" fontWeight="700" fontSize="44" fill="#b02218">
        <text x="1" y="35" textLength="160" lengthAdjust="spacingAndGlyphs">Carnegie</text>
        <text x="1" y="71" textLength="120" lengthAdjust="spacingAndGlyphs">Mellon</text>
        <text x="1" y="107" textLength="178" lengthAdjust="spacingAndGlyphs">University</text>
      </svg>
      <nav className="ml-[202px] flex gap-[80px] whitespace-nowrap text-[26px] tracking-[5.2px] [-webkit-text-stroke:0.3px_currentColor]">
        {NAV.map((n) => (
          <a key={n} className={n === "LOCATIONS" ? "text-[#c32032]" : "text-black"}>{n}</a>
        ))}
      </nav>
    </header>
  );
}

export default function App() {
  return (
    <div className="h-[2056px] w-[2764px] overflow-hidden bg-[linear-gradient(180deg,#3f3d66_0%,#5a4a72_20%,#3a1f38_60%,#2a1a2c_100%)] pl-[2px] pt-[2px] font-[Inter,sans-serif] text-black">
      <div className="relative h-[2054px] w-[2762px] overflow-hidden rounded-t-[10px] bg-white">
        <div className="bg-[#f2f2f2]">
          <TitleBar />
          <Toolbar />
          <BookmarkBar />
        </div>
        <SiteHeader />
        <main className="flex h-[1421px] bg-[#f2f2f2] font-['Liberation_Sans',sans-serif] text-[26px] leading-[46px] text-[#8a9499] [clip-path:polygon(0_0,100%_0,100%_1182px,0_1421px)]">
          <div className="ml-[368px] w-[664px] pt-[114px]">
            <PinShape className="ml-[2px] h-[141px] w-[97px]" color="#a9a9a9" />
            <h2 className="mt-[40px] text-[40px] leading-[46px] text-black [-webkit-text-stroke:0.4px_currentColor]">Locations</h2>
            <p className="mt-[23px] w-[500px] [-webkit-text-stroke:0.4px_currentColor]">
              This map shows where IS alumni are<br />working/attending school. Zoom into and<br />click the pins to learn more about each<br />location!
            </p>
            <h3 className="mt-[87px] text-[32px] leading-[46px] [-webkit-text-stroke:0.4px_currentColor]">Legend</h3>
            <div className="mt-[13px] flex h-[46px] items-center gap-[7px] [-webkit-text-stroke:0.4px_currentColor]"><PinShape className="h-[43px] w-[30px]" color="#d24841" hole={23} />Companies alumni are working at</div>
            <div className="flex h-[46px] items-center gap-[7px] [-webkit-text-stroke:0.4px_currentColor]"><PinShape className="h-[43px] w-[30px]" color="#3f94e1" hole={23} />Educational institutions alumni attend</div>
          </div>
          <div className="relative mt-[18px] h-[800px] w-[1300px] shadow-[0_13px_28px_-10px_rgba(0,0,0,0.21)]">
            <MapCanvas />
            <div className="absolute right-[20px] bottom-[48px] flex h-[110px] w-[56px] flex-col items-center rounded-[4px] bg-white shadow-[0_2px_6px_rgba(0,0,0,0.25)]">
              <svg viewBox="0 0 22 22" className="mt-[16px] ml-[2px] size-[22px]"><path d="M8 0h6v8h8v6h-8v8H8v-8H0V8h8z" fill="#666" /></svg>
              <span className="mt-[16px] h-[2px] w-[38px] bg-[#e5e5e5]" />
              <svg viewBox="0 0 22 6" className="mt-[24px] ml-[2px] h-[6px] w-[22px]"><path d="M0 0h22v6H0z" fill="#666" /></svg>
            </div>
            <div className="absolute right-0 bottom-px flex h-[27px] gap-[2px] font-[Roboto,sans-serif] text-[20px] leading-[26px] text-[#444]">
              <span className="w-[298px] bg-[#f5f5f5]/70 pl-[10px]">Map data ©2018 Google, INEGI</span>
              <span className="w-[140px] bg-[#f5f5f5]/70 pl-[10px]">Terms of Use</span>
            </div>
          </div>
        </main>
        <div className="absolute top-[1596px] right-[2px] h-[236px] w-[14px] rounded-full bg-[#7f7f7f]" />
      </div>
    </div>
  );
}
